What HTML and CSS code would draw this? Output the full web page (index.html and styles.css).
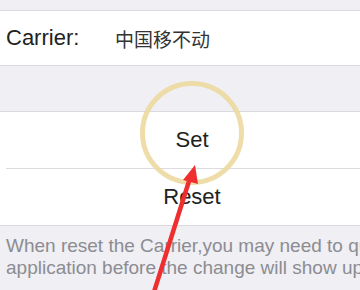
FILE: index.html
```html
<!DOCTYPE html>
<html>
<head>
<meta charset="utf-8">
<link rel="stylesheet" href="styles.css">
</head>
<body>
<div class="screen">
  <div class="top-band"></div>
  <div class="group">
    <div class="row carrier-row">
      <span class="label">Carrier:</span>
      <span class="value">中国移不动</span>
    </div>
  </div>
  <div class="gap"></div>
  <div class="group">
    <div class="row action-row">Set</div>
    <div class="sep"></div>
    <div class="row action-row">Reset</div>
  </div>
  <div class="footer">
    <div class="note">When reset the Carrier,you may need to quit the</div>
    <div class="note">application before the change will show up.</div>
  </div>
  <svg class="overlay" width="360" height="290" viewBox="0 0 360 290">
    <circle cx="192" cy="133" r="49.5" fill="none" stroke="#ecd9a0" stroke-width="5" opacity="0.9"/>
    <line x1="154" y1="292" x2="190" y2="178" stroke="#ef2f2f" stroke-width="4.5"/>
    <polygon points="195,165 183,180 198,184" fill="#ef2f2f"/>
  </svg>
</div>
</body>
</html>
```
FILE: styles.css
```css
html, body {
  margin: 0;
  padding: 0;
}
body {
  background: #efeff4;
  font-family: "Liberation Sans", Arial, "Noto Sans CJK SC", sans-serif;
  color: #222222;
}
.screen {
  position: relative;
  width: 360px;
  height: 290px;
  overflow: hidden;
}
.top-band {
  height: 10px;
  border-bottom: 1px solid #d9d9de;
}
.group {
  background: #ffffff;
  border-bottom: 1px solid #d9d9de;
}
.gap {
  height: 45px;
  border-bottom: 1px solid #d9d9de;
}
.row {
  display: flex;
  align-items: center;
}
.carrier-row {
  height: 54px;
  padding-left: 6px;
  font-size: 22px;
}
.label {
  width: 109px;
}
.value {
  font-family: "Noto Sans CJK SC", sans-serif;
  font-size: 19px;
  color: #333333;
}
.action-row {
  height: 56px;
  justify-content: center;
  font-size: 22px;
  padding-left: 24px;
}
.sep {
  height: 1px;
  margin-left: 6px;
  background: #dcdce0;
}
.footer {
  padding: 9px 0 0 6px;
  white-space: nowrap;
}
.note {
  font-size: 19px;
  line-height: 22px;
  color: #8c8c91;
}
.overlay {
  position: absolute;
  left: 0;
  top: 0;
}
```
